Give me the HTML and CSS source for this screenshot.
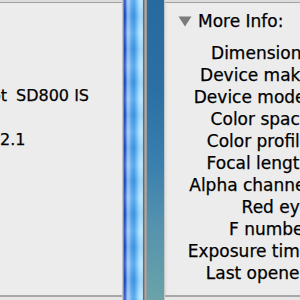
FILE: index.html
```html
<!DOCTYPE html>
<html>
<head>
<meta charset="utf-8">
<link rel="stylesheet" href="styles.css">
</head>
<body>
<div class="screen">
  <div class="panel left">
    <div class="strip-top"></div>
    <div class="pane">
      <div class="value model"><span>Canon <span class="wide">PowerShot</span> SD800 IS</span></div>
      <div class="value blank"></div>
      <div class="value">2.1</div>
    </div>
    <div class="strip-bottom"></div>
  </div>
  <div class="win-edge"></div>
  <div class="aqua"></div>
  <div class="frame"></div>
  <div class="desktop"></div>
  <div class="panel right">
    <div class="strip-top"></div>
    <div class="pane info">
      <div class="inner">
        <div class="header">
          <svg class="disclosure" width="14" height="11" viewBox="0 0 14 11"><polygon points="0.5,0.5 13.5,0.5 7,10.5" fill="#7b7b7b"/></svg>
          <span>More Info:</span>
        </div>
        <div class="labels">
          <div>Dimensions:</div>
          <div>Device make:</div>
          <div>Device model:</div>
          <div>Color space:</div>
          <div>Color profile:</div>
          <div>Focal length:</div>
          <div>Alpha channel:</div>
          <div>Red eye:</div>
          <div>F number:</div>
          <div>Exposure time:</div>
          <div>Last opened:</div>
        </div>
      </div>
    </div>
    <div class="strip-bottom"></div>
  </div>
</div>
</body>
</html>
```

FILE: styles.css
```css
html, body {
  margin: 0;
  padding: 0;
}
body {
  width: 300px;
  height: 300px;
  overflow: hidden;
  font-family: "DejaVu Sans", Verdana, sans-serif;
  font-size: 16px;
  color: #000;
  -webkit-text-stroke: 0.25px #000;
}
.screen {
  display: flex;
  width: 300px;
  height: 300px;
}
.panel {
  display: flex;
  flex-direction: column;
  height: 300px;
  background: #ececec;
  overflow: hidden;
}
.strip-top {
  height: 2px;
  background: #dcdcdc;
  flex: none;
}
.pane {
  flex: 1;
  border-top: 1px solid #a2a2a2;
  border-bottom: 2px solid #a8a8a8;
  background: #ececec;
}
.strip-bottom {
  height: 3px;
  background: #e6e6e6;
  flex: none;
}
.left {
  width: 122px;
  flex: none;
}
.left .pane {
  padding-top: 82px;
  line-height: 22px;
  white-space: nowrap;
}
.value {
  height: 22px;
}
.model {
  width: 89px;
  display: flex;
  justify-content: flex-end;
}
.model > span {
  flex: none;
}
.wide {
  padding-right: 4px;
}
.win-edge {
  width: 2px;
  flex: none;
  background: linear-gradient(to right, #c4c4c4 0 1px, #8e8e8e 1px 2px);
}
.aqua {
  width: 19px;
  flex: none;
  background:
    repeating-linear-gradient(to bottom, rgba(255,255,255,0.14) 0px, rgba(0,40,120,0.08) 16px, rgba(255,255,255,0.14) 33px),
    linear-gradient(to right, #1a48c4 0px, #1a48c4 1px, #3d72d8 2px, #8ab9f0 3px, #9bc8f4 5px, #5aa9ef 7px, #3a9aea 10px, #6fc2f8 13px, #a6dcfd 15px, #b6e6ff 18px, #9fd0f0 19px);
}
.frame {
  width: 4px;
  flex: none;
  background: linear-gradient(to right, #6c6c6c 0 1px, #8d8d8d 1px 2px, #a9a9a9 2px 3px, #9a9a9a 3px 4px);
}
.desktop {
  width: 17px;
  flex: none;
  background: linear-gradient(to bottom, #286a9e 0%, #2c6fa3 30%, #3a7fae 55%, #5592ae 75%, #6aa3a8 100%);
}
.right {
  flex: 1;
  border-left: 1px solid #c6c6c6;
  font-size: 17px;
}
.info {
  box-shadow: inset 3px 0 3px -2px rgba(0,0,0,0.08);
  padding-top: 7px;
}
.inner {
  width: 151px;
}
.header {
  display: flex;
  align-items: center;
  height: 22px;
  line-height: 22px;
  padding-left: 13px;
  gap: 6px;
  margin-bottom: 10px;
  white-space: nowrap;
}
.disclosure {
  flex: none;
  margin-top: 1px;
  -webkit-text-stroke: 0;
}
.labels {
  text-align: right;
  line-height: 22px;
  white-space: nowrap;
}
.labels div {
  height: 22px;
}
```
